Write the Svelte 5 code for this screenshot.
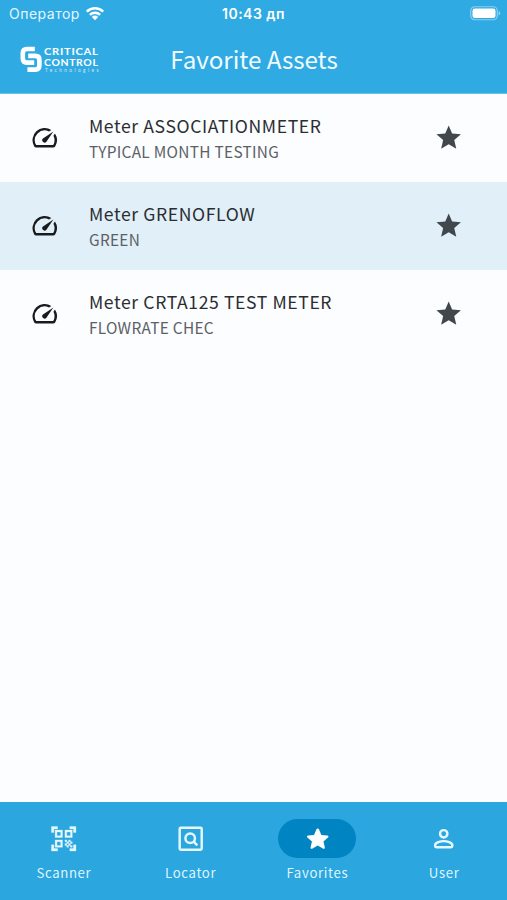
<script>
  const assets = [
    { name: "Meter ASSOCIATIONMETER", detail: "TYPICAL MONTH TESTING" },
    { name: "Meter GRENOFLOW", detail: "GREEN" },
    { name: "Meter CRTA125 TEST METER", detail: "FLOWRATE CHEC" },
  ];
  const tabs = ["Scanner", "Locator", "Favorites", "User"];
  let selected = $state("Favorites");
</script>

<div class="screen">
  <header>
    <div class="status">
      <div class="carrier">
        <span>Оператор</span>
        <svg class="wifi" viewBox="0 0 20 15">
          <path d="M1.8 5.6a11.7 11.7 0 0 1 16.4 0M4.9 8.9a7.3 7.3 0 0 1 10.2 0" fill="none" stroke="currentColor" stroke-width="2.5" />
          <path d="M6.8 10.9a4.6 4.6 0 0 1 6.4 0L10 14.2z" fill="currentColor" />
        </svg>
      </div>
      <div class="time">10:43 дп</div>
      <svg class="battery" viewBox="0 0 31 15">
        <rect x="0.75" y="0.75" width="26.5" height="13" rx="4" fill="none" stroke="currentColor" stroke-width="1.2" opacity=".45" />
        <rect x="2.5" y="2.5" width="23" height="9.5" rx="2.2" fill="currentColor" />
        <path d="M28.6 5v4.5q1.6-.8 1.6-2.25T28.6 5z" fill="currentColor" opacity=".5" />
      </svg>
    </div>
    <div class="bar">
      <svg class="logo" viewBox="0 0 80 28">
        <g fill="none" stroke="currentColor" stroke-width="4.6" stroke-linejoin="round">
          <path d="M14.8 3H6.8Q2.8 3 2.8 7V12.6Q2.8 16.6 6.8 16.6H14.2" />
          <path d="M8.2 9.9H15.4Q19.4 9.9 19.4 13.9V19.6Q19.4 23.6 15.4 23.6H7.4" />
        </g>
        <text class="brand" x="24" y="9.2" textLength="54.5" lengthAdjust="spacingAndGlyphs">CRITICAL</text>
        <text class="brand" x="24" y="19.8" textLength="54.5" lengthAdjust="spacingAndGlyphs">CONTROL</text>
        <text class="sub" x="25" y="26" textLength="53.5">Technologies</text>
      </svg>
      <h1>Favorite Assets</h1>
    </div>
  </header>

  <main>
    {#each assets as asset, i}
      <div class="row" class:tinted={i % 2 === 1}>
        <svg class="icon" viewBox="0 0 24 24">
          <path d="M20.38 8.57l-1.23 1.85a8 8 0 0 1-.22 7.58H5.07A8 8 0 0 1 15.58 6.85l1.85-1.23A10 10 0 0 0 3.35 19a2 2 0 0 0 1.72 1h13.85a2 2 0 0 0 1.74-1 10 10 0 0 0-.27-10.44zM10.59 15.41a2 2 0 0 0 2.83 0l5.66-8.49-8.49 5.66a2 2 0 0 0 0 2.83z" />
        </svg>
        <div class="text">
          <div class="name">{asset.name}</div>
          <div class="detail">{asset.detail}</div>
        </div>
        <svg class="icon star" viewBox="0 0 24 24">
          <path d="M12 17.27L18.18 21l-1.64-7.03L22 9.24l-7.19-.61L12 2 9.19 8.63 2 9.24l5.46 4.73L5.82 21z" />
        </svg>
      </div>
    {/each}
  </main>

  <nav>
    {#each tabs as tab}
      <button class:active={selected === tab} onclick={() => (selected = tab)}>
        <span class="pill">
          <svg class="icon" viewBox="0 0 24 24">
            {#if tab === "Scanner"}
              <path stroke="currentColor" stroke-width=".25" d="M9.5 6.5v3h-3v-3h3M11 5H5v6h6V5zM9.5 14.5v3h-3v-3h3M11 13H5v6h6v-6zM17.5 6.5v3h-3v-3h3M19 5h-6v6h6V5zM13 13h1.5v1.5H13zM14.5 14.5H16V16h-1.5zM16 13h1.5v1.5H16zM13 16h1.5v1.5H13zM14.5 17.5H16V19h-1.5zM16 16h1.5v1.5H16zM17.5 14.5H19V16h-1.5zM17.5 17.5H19V19h-1.5zM22 7h-2V4h-3V2h5v5zM22 22v-5h-2v3h-3v2h5zM2 22h5v-2H4v-3H2v5zM2 2v5h2V4h3V2H2z" />
            {:else if tab === "Locator"}
              <g fill="none" stroke="currentColor" stroke-width="2">
                <rect x="3" y="3" width="18" height="18" rx="1" />
                <circle cx="11.6" cy="11.6" r="3.9" />
                <path d="M14.2 14.2l3.2 3.2" />
              </g>
            {:else if tab === "Favorites"}
              <path d="M12 17.6l-4.2 2.5c-.9.5-1.8-.1-1.6-1.1l1.1-4.7-3.7-3.2c-.8-.7-.4-1.7.6-1.8l4.8-.4 1.9-4.5c.4-.9 1.8-.9 2.2 0L15 8.9l4.8.4c1 .1 1.4 1.1.6 1.8l-3.7 3.2 1.1 4.7c.2 1-.7 1.6-1.6 1.1z" />
            {:else}
              <g fill="none" stroke="currentColor" stroke-width="2">
                <circle cx="12" cy="8" r="3" />
                <path d="M5 17.2C5 15 9.5 14 12 14s7 1 7 3.2V18q0 1-1 1H6q-1 0-1-1z" />
              </g>
            {/if}
          </svg>
        </span>
        <span class="label">{tab}</span>
      </button>
    {/each}
  </nav>
</div>

<style>
  :global(body) {
    margin: 0;
  }
  .screen {
    display: flex;
    flex-direction: column;
    height: 900px;
    background: #fcfdff;
    font-family: "Noto Sans CJK SC", "Noto Sans", sans-serif;
  }
  header {
    height: 94px;
    background: #2faae3;
    color: #fff;
    box-sizing: border-box;
    border-bottom: 1px solid #6bc1ea;
  }
  .status {
    display: grid;
    grid-template-columns: 1fr auto 1fr;
    align-items: center;
    height: 27px;
    padding: 0 6px 0 9px;
    font-family: Inter, sans-serif;
    font-size: 14px;
  }
  .carrier {
    display: flex;
    align-items: center;
    gap: 5px;
    color: #e4f7ff;
    letter-spacing: 0.5px;
  }
  .wifi {
    width: 20px;
    height: 15px;
    color: #fff;
  }
  .time {
    margin-right: 3px;
    font-weight: 600;
    letter-spacing: 0.5px;
  }
  .battery {
    width: 31px;
    height: 15px;
    justify-self: end;
  }
  .bar {
    display: grid;
    grid-template-columns: 1fr auto 1fr;
    align-items: center;
    height: 66px;
  }
  .logo {
    width: 80px;
    height: 28px;
    margin-left: 20px;
  }
  .logo text {
    fill: currentColor;
    font-family: Lato, sans-serif;
  }
  .logo .brand {
    font-size: 9.8px;
    font-weight: 700;
    letter-spacing: 0.6px;
  }
  .logo .sub {
    font-size: 4.8px;
    opacity: 0.75;
  }
  h1 {
    margin: 0 0 2px 1px;
    font-size: 24.2px;
    font-weight: 400;
    line-height: 36px;
    letter-spacing: -0.05px;
    color: #f2fbff;
  }
  main {
    flex: 1;
  }
  .row {
    display: flex;
    align-items: center;
    height: 88px;
    padding: 0 44px 0 30px;
    box-sizing: border-box;
  }
  .tinted {
    background: #e0eff8;
  }
  .icon {
    display: block;
    flex: none;
    width: 29.4px;
    height: 29.4px;
    fill: currentColor;
    color: #191c1e;
  }
  .star {
    color: #41484d;
  }
  .text {
    flex: 1;
    margin-left: 29.6px;
  }
  .name {
    font-size: 17.6px;
    line-height: 28px;
    letter-spacing: 0.6px;
    color: #2b2e31;
  }
  .detail {
    margin-top: -1px;
    font-size: 15.4px;
    line-height: 25px;
    letter-spacing: 0.3px;
    color: #5b6165;
  }
  nav {
    display: flex;
    height: 98px;
    background: #2ba6df;
  }
  button {
    display: flex;
    flex: 1;
    flex-direction: column;
    align-items: center;
    padding: 17px 0 0;
    border: 0;
    background: none;
    font: inherit;
    color: #dff5ff;
  }
  .pill {
    display: flex;
    align-items: center;
    justify-content: center;
    width: 78px;
    height: 39px;
    border-radius: 20px;
  }
  .active .pill {
    background: #0085c2;
  }
  .pill .icon {
    margin-left: 1px;
    color: #e6f8ff;
  }
  .active .pill .icon {
    color: #fff;
  }
  .label {
    margin: 5px 0 0 1px;
    font-size: 13.2px;
    line-height: 20px;
    letter-spacing: 0.65px;
  }
</style>
